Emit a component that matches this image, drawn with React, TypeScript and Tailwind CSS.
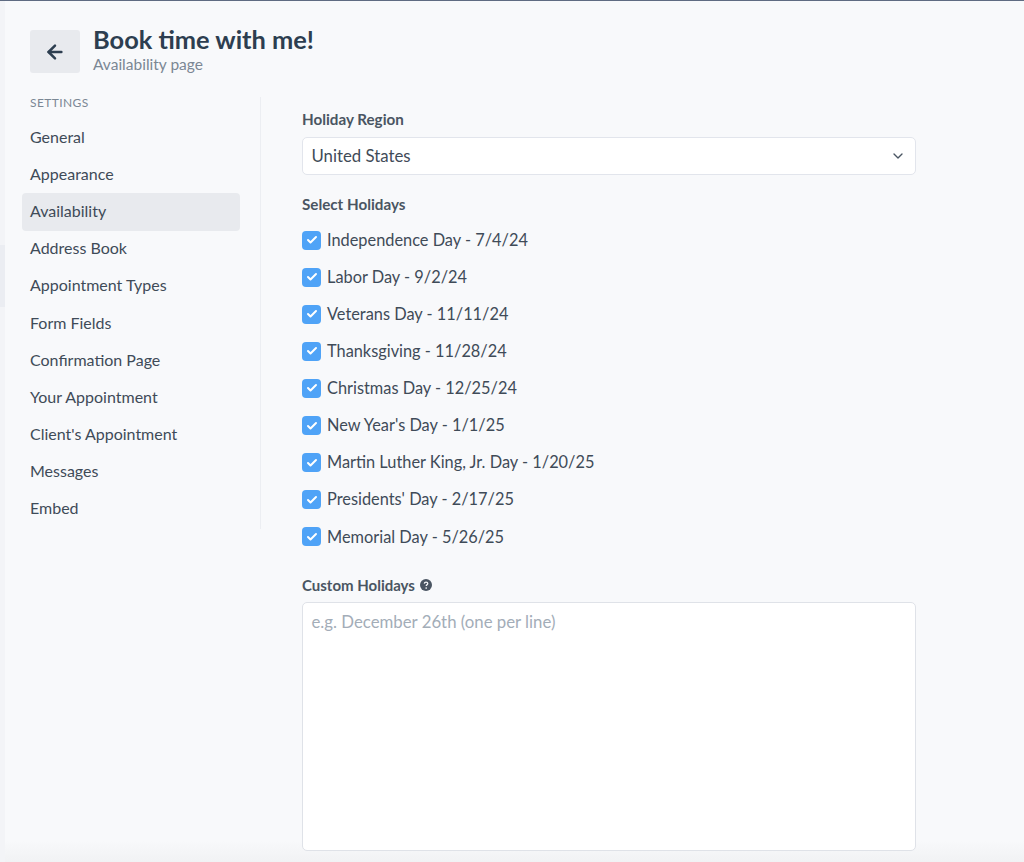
import { ArrowLeft, ChevronDown, Check } from "lucide-react"

const settingsLinks = [
  "General",
  "Appearance",
  "Availability",
  "Address Book",
  "Appointment Types",
  "Form Fields",
  "Confirmation Page",
  "Your Appointment",
  "Client's Appointment",
  "Messages",
  "Embed",
]

const holidays = [
  "Independence Day - 7/4/24",
  "Labor Day - 9/2/24",
  "Veterans Day - 11/11/24",
  "Thanksgiving - 11/28/24",
  "Christmas Day - 12/25/24",
  "New Year's Day - 1/1/25",
  "Martin Luther King, Jr. Day - 1/20/25",
  "Presidents' Day - 2/17/25",
  "Memorial Day - 5/26/25",
]

export default function App() {
  return (
    <div className="flex h-[862px] flex-col overflow-hidden bg-[linear-gradient(#f8f9fb_97.5%,#f1f2f4)] font-['Lato','Liberation_Sans',sans-serif] text-[#3f4b58]">
      <div className="h-[1px] shrink-0 bg-[#5f6b82]" />
      <div className="flex min-h-0 flex-1">
        {/* Sliver of the app nav behind the page */}
        <div className="flex w-[5px] shrink-0 flex-col bg-[#f3f4f7] pt-[244px]">
          <div className="h-[62px] bg-[#ebedf2]" />
        </div>

        <div className="min-w-0 flex-1 pl-[25px]">
          {/* Header */}
          <header className="mt-[29px] flex h-[44px] items-start gap-[13px]">
            <button className="flex h-[43px] w-[50px] items-center justify-center rounded-[3px] bg-[#e8eaee] text-[#2d3e50]">
              <ArrowLeft className="h-[22px] w-[22px]" strokeWidth={2.7} />
            </button>
            <div className="-mt-[4px]">
              <h1 className="text-[25.4px] leading-[26px] font-bold text-[#2d3e50]">Book time with me!</h1>
              <p className="mt-[2px] text-[15.5px] leading-[20px] text-[#7b8794]">Availability page</p>
            </div>
          </header>

          <div className="mt-[23px] flex">
            {/* Settings nav */}
            <nav className="h-[432px] w-[231px] shrink-0 border-r border-[#eceef2]">
              <p className="-mt-[1px] h-[14px] text-[12px] leading-[14px] tracking-[0.4px] text-[#7b8794]">SETTINGS</p>
              <ul className="mt-[9px] -ml-[8px] w-[218px]">
                {settingsLinks.map((label) => (
                  <li
                    key={label}
                    className={
                      label === "Availability"
                        ? "flex h-[37.2px] items-center rounded-[4px] bg-[#e8eaee] pb-[2px] pl-[8px] text-[16px]"
                        : "flex h-[37.2px] items-center pb-[2px] pl-[8px] text-[16px]"
                    }
                  >
                    {label}
                  </li>
                ))}
              </ul>
            </nav>

            {/* Holiday form */}
            <main className="ml-[41px] w-[614px] shrink-0 pt-[13px]">
              <label className="block text-[15.2px] leading-[18px] font-bold text-[#4a5562]">Holiday Region</label>
              <div className="mt-[9px] flex h-[38px] items-center justify-between rounded-[5px] border border-[#e2e5ec] bg-white pr-[9px] pl-[8.5px] text-[16.8px]">
                <span>United States</span>
                <ChevronDown className="h-[16px] w-[16px] text-[#4a5562]" strokeWidth={2} />
              </div>

              <p className="mt-[20px] text-[15.2px] leading-[18px] font-bold text-[#4a5562]">Select Holidays</p>
              <ul className="mt-[9px]">
                {holidays.map((holiday) => (
                  <li key={holiday} className="flex h-[37.1px] items-center gap-[6px] pb-[1px] text-[16.35px]">
                    <span className="flex h-[19px] w-[19px] items-center justify-center rounded-[4px] bg-[#4fa3f7] text-white">
                      <Check className="h-[12px] w-[12px]" strokeWidth={4} />
                    </span>
                    {holiday}
                  </li>
                ))}
              </ul>

              <div className="mt-[20px] flex items-center gap-[5px]">
                <span className="text-[15px] leading-[18px] font-bold text-[#4a5562]">Custom Holidays</span>
                <svg viewBox="0 0 24 24" className="h-[12px] w-[12px]">
                  <circle cx="12" cy="12" r="12" fill="#4a5562" />
                  <path
                    d="M8.6 9.2c.2-1.9 1.6-3 3.5-3 2 0 3.4 1.2 3.4 2.9 0 1.3-.7 2-1.8 2.7-.9.6-1.2 1-1.2 2"
                    fill="none"
                    stroke="#f8f9fb"
                    strokeWidth="2.6"
                  />
                  <circle cx="12.4" cy="18" r="1.7" fill="#f8f9fb" />
                </svg>
              </div>
              <div className="mt-[8px] h-[249px] rounded-[5px] border border-[#dfe2e8] bg-white px-[8.5px] py-[8px] text-[16.8px] leading-[22px] text-[#a3adb8]">
                e.g. December 26th (one per line)
              </div>
            </main>
          </div>
        </div>
      </div>
    </div>
  )
}
